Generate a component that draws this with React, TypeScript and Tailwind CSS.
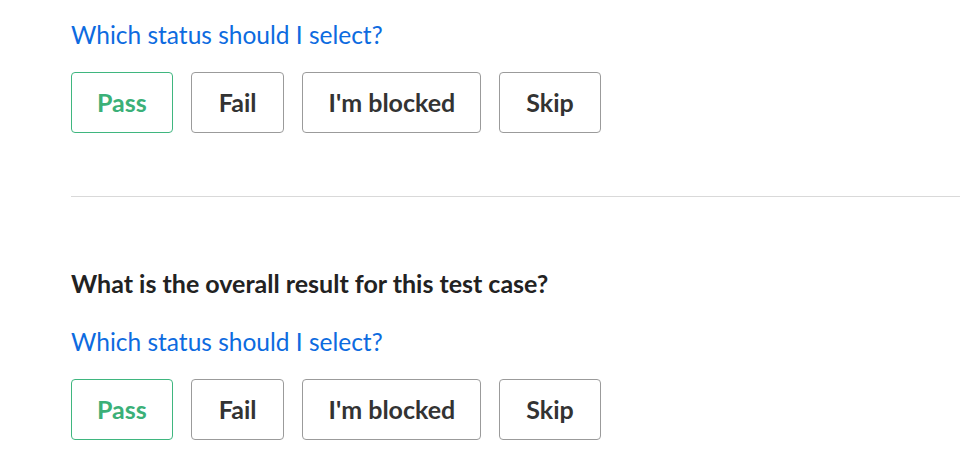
import React from 'react';

const statuses = [
  { label: 'Pass', pad: 'px-[25px]' },
  { label: 'Fail', pad: 'px-[27px]' },
  { label: "I'm blocked", pad: 'px-[25px]' },
  { label: 'Skip', pad: 'px-[26px]' },
];

function StatusButtons() {
  return (
    <div className="mt-[22px] flex gap-[18px]">
      {statuses.map((s) => (
        <button
          key={s.label}
          className={
            s.label === 'Pass'
              ? `h-[61px] ${s.pad} rounded-[4px] border border-[#3fb67f] text-[#3bb078] text-[25px] font-bold bg-white`
              : `h-[61px] ${s.pad} rounded-[4px] border border-[#9b9b9b] text-[#333333] text-[25px] font-bold bg-white`
          }
        >
          {s.label}
        </button>
      ))}
    </div>
  );
}

function HelpLink() {
  return (
    <a href="#" className="block text-[24.5px] leading-[30px] text-[#0d6be0]">
      Which status should I select?
    </a>
  );
}

export default function App() {
  return (
    <div className="w-[960px] h-[475px] bg-white overflow-hidden" style={{ fontFamily: 'Lato, "Open Sans", sans-serif' }}>
      <div className="pl-[71px] pt-[20px]">
        <HelpLink />
        <StatusButtons />
      </div>

      <div className="ml-[71px] mt-[63px] h-px bg-[#d9d9d9]" />

      <div className="pl-[71px]">
        <h2 className="mt-[71px] text-[25px] leading-[30px] font-bold text-[#222222]">
          What is the overall result for this test case?
        </h2>
        <div className="mt-[29px]">
          <HelpLink />
        </div>
        <StatusButtons />
      </div>
    </div>
  );
}
